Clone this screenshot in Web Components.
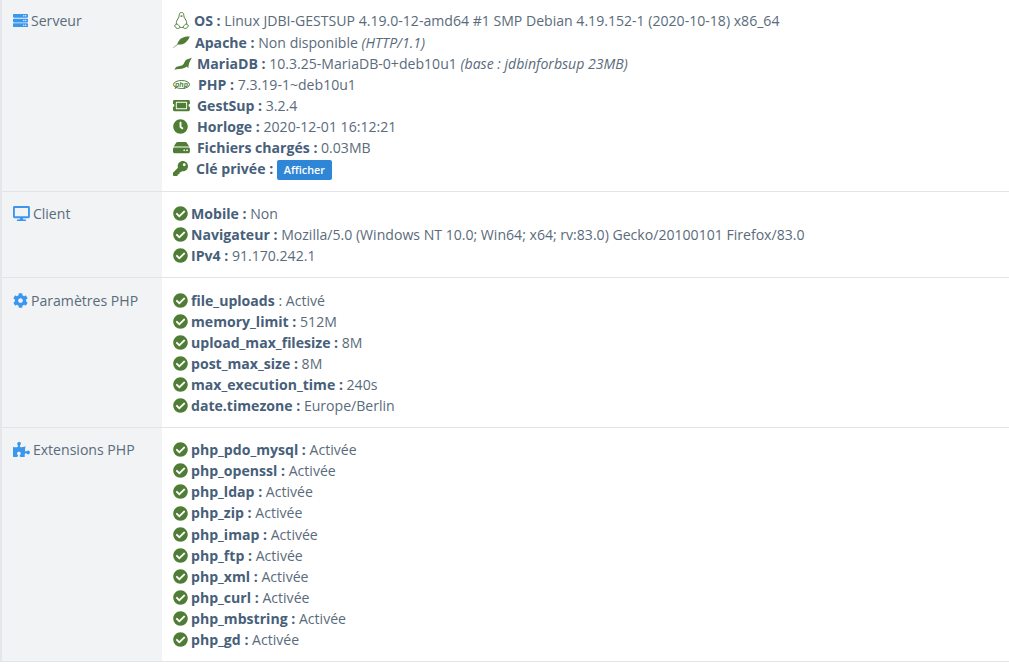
<!DOCTYPE html>
<html lang="fr">
<head>
<meta charset="utf-8">
<title>Système</title>
<style>
    html, body { margin: 0; padding: 0; background: #fff; }
    body { font: 14.08px/1.5 "Open Sans", sans-serif; color: #5a6b7b; overflow: hidden; }
</style>
</head>
<body>
<sys-table>
    <sys-row label="Serveur" icon="server" width="15" top="10.4" bottom="11.6">
        <sys-line icon="linux" width="15" left="1" gap="5"><b>OS :</b> Linux JDBI-GESTSUP 4.19.0-12-amd64 #1 SMP Debian 4.19.152-1 (2020-10-18) x86_64</sys-line>
        <sys-line icon="feather" width="17" gap="5"><b>Apache :</b> Non disponible <i>(HTTP/1.1)</i></sys-line>
        <sys-line icon="seal" width="18" left="1" gap="5"><b>MariaDB :</b> 10.3.25-MariaDB-0+deb10u1 <i>(base : jdbinforbsup 23MB)</i></sys-line>
        <sys-line icon="php" width="17" gap="8"><b>PHP :</b> 7.3.19-1~deb10u1</sys-line>
        <sys-line icon="ticket" width="16.9" gap="7"><b>GestSup :</b> 3.2.4</sys-line>
        <sys-line icon="clock" width="15" gap="9"><b>Horloge :</b> 2020-12-01 16:12:21</sys-line>
        <sys-line icon="hdd" width="16.9" gap="7"><b>Fichiers chargés :</b> 0.03MB</sys-line>
        <sys-line icon="key" width="15" gap="8"><b>Clé privée :</b> <sys-button>Afficher</sys-button></sys-line>
    </sys-row>
    <sys-row label="Client" icon="desktop" width="16.9">
        <sys-line><b>Mobile :</b> Non</sys-line>
        <sys-line><b>Navigateur :</b> Mozilla/5.0 (Windows NT 10.0; Win64; x64; rv:83.0) Gecko/20100101 Firefox/83.0</sys-line>
        <sys-line><b>IPv4 :</b> 91.170.242.1</sys-line>
    </sys-row>
    <sys-row label="Paramètres PHP" icon="cog" width="15" top="11.4" bottom="10.6">
        <sys-line><b>file_uploads</b> : Activé</sys-line>
        <sys-line><b>memory_limit :</b> 512M</sys-line>
        <sys-line><b>upload_max_filesize :</b> 8M</sys-line>
        <sys-line><b>post_max_size :</b> 8M</sys-line>
        <sys-line><b>max_execution_time :</b> 240s</sys-line>
        <sys-line><b>date.timezone :</b> Europe/Berlin</sys-line>
    </sys-row>
    <sys-row label="Extensions PHP" icon="puzzle" width="16.9" top="11.3" bottom="10.7">
        <sys-line><b>php_pdo_mysql :</b> Activée</sys-line>
        <sys-line><b>php_openssl :</b> Activée</sys-line>
        <sys-line><b>php_ldap :</b> Activée</sys-line>
        <sys-line><b>php_zip :</b> Activée</sys-line>
        <sys-line><b>php_imap :</b> Activée</sys-line>
        <sys-line><b>php_ftp :</b> Activée</sys-line>
        <sys-line><b>php_xml :</b> Activée</sys-line>
        <sys-line><b>php_curl :</b> Activée</sys-line>
        <sys-line><b>php_mbstring :</b> Activée</sys-line>
        <sys-line><b>php_gd :</b> Activée</sys-line>
    </sys-row>
</sys-table>

<script>
// icones du jeu d'icones, puis logos redessines a la main
const ICONS = {
    check: ['0 0 512 512', '<path d="M504 256c0 136.967-111.033 248-248 248S8 392.967 8 256 119.033 8 256 8s248 111.033 248 248zM227.314 387.314l184-184c6.248-6.248 6.248-16.379 0-22.627l-22.627-22.627c-6.248-6.249-16.379-6.249-22.628 0L216 308.118l-70.059-70.059c-6.248-6.248-16.379-6.248-22.628 0l-22.627 22.627c-6.248 6.248-6.248 16.379 0 22.627l104 104c6.249 6.249 16.379 6.249 22.628.001z"/>'],
    clock: ['0 0 512 512', '<path d="M256,8C119,8,8,119,8,256S119,504,256,504,504,393,504,256,393,8,256,8Zm92.49,313h0l-20,25a16,16,0,0,1-22.49,2.5h0l-67-49.72a40,40,0,0,1-15-31.23V112a16,16,0,0,1,16-16h32a16,16,0,0,1,16,16V256l58,42.5A16,16,0,0,1,348.49,321Z"/>'],
    key: ['0 0 512 512', '<path d="M512 176.001C512 273.203 433.202 352 336 352c-11.22 0-22.19-1.062-32.827-3.069l-24.012 27.014A23.999 23.999 0 0 1 261.223 384H224v40c0 13.255-10.745 24-24 24h-40v40c0 13.255-10.745 24-24 24H24c-13.255 0-24-10.745-24-24v-78.059c0-6.365 2.529-12.47 7.029-16.971l161.802-161.802C163.108 213.814 160 195.271 160 176 160 78.798 238.797.001 335.999 0 433.488-.001 512 78.511 512 176.001zM336 128c0 26.51 21.49 48 48 48s48-21.49 48-48-21.49-48-48-48-48 21.49-48 48z"/>'],
    hdd: ['0 0 576 512', '<path d="M576 304v96c0 26.51-21.49 48-48 48H48c-26.51 0-48-21.49-48-48v-96c0-26.51 21.49-48 48-48h480c26.51 0 48 21.49 48 48zm-48-80a79.557 79.557 0 0 1 30.777 6.165L462.25 85.374A48.003 48.003 0 0 0 422.311 64H153.689a48 48 0 0 0-39.938 21.374L17.223 230.165A79.557 79.557 0 0 1 48 224h480zm-48 96c-17.673 0-32 14.327-32 32s14.327 32 32 32 32-14.327 32-32-14.327-32-32-32zm-96 0c-17.673 0-32 14.327-32 32s14.327 32 32 32 32-14.327 32-32-14.327-32-32-32z"/>'],
    ticket: ['0 0 576 512', '<path d="M128 160h320v192H128V160zm400 96c0 26.51 21.49 48 48 48v96c0 26.51-21.49 48-48 48H48c-26.51 0-48-21.49-48-48v-96c26.51 0 48-21.49 48-48s-21.49-48-48-48v-96c0-26.51 21.49-48 48-48h480c26.51 0 48 21.49 48 48v96c-26.51 0-48 21.49-48 48zm-48-104c0-13.255-10.745-24-24-24H120c-13.255 0-24 10.745-24 24v208c0 13.255 10.745 24 24 24h336c13.255 0 24-10.745 24-24V152z"/>'],
    server: ['0 0 512 512', '<path d="M480 160H32c-17.673 0-32-14.327-32-32V64c0-17.673 14.327-32 32-32h448c17.673 0 32 14.327 32 32v64c0 17.673-14.327 32-32 32zm-48-88c-13.255 0-24 10.745-24 24s10.745 24 24 24 24-10.745 24-24-10.745-24-24-24zm-64 0c-13.255 0-24 10.745-24 24s10.745 24 24 24 24-10.745 24-24-10.745-24-24-24zm112 248H32c-17.673 0-32-14.327-32-32v-64c0-17.673 14.327-32 32-32h448c17.673 0 32 14.327 32 32v64c0 17.673-14.327 32-32 32zm-48-88c-13.255 0-24 10.745-24 24s10.745 24 24 24 24-10.745 24-24-10.745-24-24-24zm-64 0c-13.255 0-24 10.745-24 24s10.745 24 24 24 24-10.745 24-24-10.745-24-24-24zm112 248H32c-17.673 0-32-14.327-32-32v-64c0-17.673 14.327-32 32-32h448c17.673 0 32 14.327 32 32v64c0 17.673-14.327 32-32 32zm-48-88c-13.255 0-24 10.745-24 24s10.745 24 24 24 24-10.745 24-24-10.745-24-24-24zm-64 0c-13.255 0-24 10.745-24 24s10.745 24 24 24 24-10.745 24-24-10.745-24-24-24z"/>'],
    desktop: ['0 0 576 512', '<path d="M528 0H48C21.5 0 0 21.5 0 48v320c0 26.5 21.5 48 48 48h192l-16 48h-72c-13.3 0-24 10.7-24 24s10.7 24 24 24h272c13.3 0 24-10.7 24-24s-10.7-24-24-24h-72l-16-48h192c26.5 0 48-21.5 48-48V48c0-26.5-21.5-48-48-48zm-16 352H64V64h448v288z"/>'],
    cog: ['0 0 512 512', '<path d="M487.4 315.7l-42.6-24.6c4.3-23.2 4.3-47 0-70.2l42.6-24.6c4.9-2.8 7.1-8.6 5.5-14-11.1-35.6-30-67.8-54.7-94.6-3.8-4.1-10-5.1-14.8-2.3L380.8 110c-17.9-15.4-38.5-27.3-60.8-35.1V25.8c0-5.6-3.9-10.5-9.4-11.7-36.7-8.2-74.3-7.8-109.2 0-5.5 1.2-9.4 6.1-9.4 11.7V75c-22.2 7.9-42.8 19.8-60.8 35.1L88.7 85.5c-4.9-2.8-11-1.9-14.8 2.3-24.7 26.7-43.6 58.9-54.7 94.6-1.7 5.4.6 11.2 5.5 14L67.3 221c-4.3 23.2-4.3 47 0 70.2l-42.6 24.6c-4.9 2.8-7.1 8.6-5.5 14 11.1 35.6 30 67.8 54.7 94.6 3.8 4.1 10 5.1 14.8 2.3l42.6-24.6c17.9 15.4 38.5 27.3 60.8 35.1v49.2c0 5.6 3.9 10.5 9.4 11.7 36.7 8.2 74.3 7.8 109.2 0 5.5-1.2 9.4-6.1 9.4-11.7v-49.2c22.2-7.9 42.8-19.8 60.8-35.1l42.6 24.6c4.9 2.8 11 1.9 14.8-2.3 24.7-26.7 43.6-58.9 54.7-94.6 1.5-5.5-.7-11.3-5.6-14.1zM256 336c-44.1 0-80-35.9-80-80s35.9-80 80-80 80 35.9 80 80-35.9 80-80 80z"/>'],
    puzzle: ['0 0 576 512', '<path d="M519.442 288.651c-41.519 0-59.5 31.593-82.058 31.593C377.409 320.244 432 144 432 144s-196.288 80-196.288-3.297c0-35.827 36.288-46.25 36.288-85.985C272 19.216 243.885 0 210.539 0c-34.654 0-66.366 18.891-66.366 56.346 0 41.364 31.711 59.277 31.711 81.75C175.885 207.719 0 166.758 0 166.758v333.237s178.635 41.047 178.635-28.662c0-22.473-40-40.107-40-81.471 0-37.456 29.25-56.346 63.577-56.346 33.673 0 61.788 19.216 61.788 54.717 0 39.735-36.288 50.158-36.288 85.985 0 60.803 129.675 25.73 181.23 25.73 0 0-34.725-120.101 25.827-120.101 35.962 0 46.423 36.152 86.308 36.152C556.712 416 576 387.99 576 354.443c0-34.199-18.962-65.792-56.558-65.792z"/>'],
    linux: ['0 0 15 17', '<g fill="none" stroke="currentColor" stroke-width="1"><path d="M7.500.5C5.800.5 5.200 1.800 5.200 3.300c0 1.600-.5 2.500-1.400 3.700-1 1.400-1.700 3-1.500 5.200M7.500.5c1.700 0 2.300 1.300 2.300 2.800 0 1.600.5 2.500 1.400 3.700 1 1.400 1.700 3 1.500 5.200"/><path d="M5.800 15.200c1 .4 2.400.4 3.400 0"/><path d="M.8 13.200c.9-.9 2.600-1.400 3.300-.6.800.9 1.800 2.300 1.600 3-.2.900-2 1-3 .7-.9-.4-2.500-2.400-1.900-3.100zM14.200 13.200c-.9-.9-2.600-1.400-3.300-.6-.8.900-1.800 2.300-1.600 3 .2.900 2 1 3 .7.900-.4 2.500-2.400 1.900-3.100z"/></g><path d="M6 3.900l1.500-.7 1.500.7-1.500 1.100z"/>'],
    feather: ['0 0 17 12', '<path d="M16.800.6c-2.900-.4-5.800.2-8.200 1.700C6.700 3.500 5 5.500 4.300 8.300c2.500.6 5.400.1 7.700-1.300C14.300 5.500 15.900 3.100 16.800.6z"/><path d="M5.200 7.300L.1 11.400l.3.500 5.400-3.800z" opacity=".7"/>'],
    seal: ['0 0 18 13', '<path d="M17.700.3c-.6 1-1.400 1.200-2.700 1.500-1.300.3-2 .5-2.700 1C11.200 3.600 10.700 5 10 6.200 9.200 7.700 8.300 8.300 6.800 8.800c-1.700.6-4.200.6-5 1.600-.5.600-1 1.500-1.300 2.400 1.400-.5 3.100-.7 4.500-.8 2-.1 3.800-.4 5.200-1 1.100-.5 2-1.200 2.800-1.600.3.800.8 1.500 1.500 1.900-.2-.9-.1-2.300.2-3.300.4-1.500.7-2.800 1.400-3.900.5-.9 1.300-1.900 1.600-3.800z"/>'],
    php: ['0 0 17 9', '<ellipse cx="8.500" cy="4.500" rx="8" ry="4" fill="none" stroke="currentColor" stroke-width="1"/><text x="8.500" y="6.700" text-anchor="middle" font-family="Liberation Sans, sans-serif" font-size="7" font-style="italic" font-weight="700">php</text>']
};

class SysIcon extends HTMLElement {
    connectedCallback() {
        const box = ICONS[this.getAttribute('name')];
        const w = parseFloat(this.getAttribute('width')) || 15;
        const [, , vw, vh] = box[0].split(' ').map(Number);
        this.attachShadow({ mode: 'open' });
        this.shadowRoot.innerHTML = `
            <style>
                :host { display: inline-flex; align-items: center; justify-content: center; height: 1.5em; vertical-align: top; }
                svg { display: block; width: ${w}px; height: ${w * vh / vw}px; fill: currentColor; }
            </style>
            <svg viewBox="${box[0]}" aria-hidden="true">${box[1]}</svg>`;
    }
}

class SysTable extends HTMLElement {
    constructor() {
        super();
        this.attachShadow({ mode: 'open' });
        this.shadowRoot.innerHTML = `
            <style>
                :host { display: block; border-left: 2px solid #e4e6e9; }
            </style>
            <slot></slot>`;
    }
}

class SysRow extends HTMLElement {
    connectedCallback() {
        const top = this.getAttribute('top') || 11;
        const bottom = this.getAttribute('bottom') || 11;
        this.attachShadow({ mode: 'open' });
        this.shadowRoot.innerHTML = `
            <style>
                :host { display: grid; grid-template-columns: 160px 1fr; border-bottom: 1px solid #e2e5e8; }
                .head { background: #f1f3f5; padding: ${top}px 11px ${bottom}px; display: flex; align-items: flex-start; gap: 3px; }
                .head sys-icon { color: #3b97ee; }
                .body { padding: ${top}px 11px ${bottom}px; }
            </style>
            <div class="head"><sys-icon name="${this.getAttribute('icon')}" width="${this.getAttribute('width')}"></sys-icon><span>${this.getAttribute('label')}</span></div>
            <div class="body"><slot></slot></div>`;
    }
}

class SysLine extends HTMLElement {
    connectedCallback() {
        const icon = this.getAttribute('icon') || 'check';
        const width = this.getAttribute('width') || 15;
        const left = this.getAttribute('left') || 0;
        const gap = this.getAttribute('gap') || 3;
        this.attachShadow({ mode: 'open' });
        this.shadowRoot.innerHTML = `
            <style>
                :host { display: block; white-space: nowrap; }
                sys-icon { color: #4f7d35; margin: 0 ${gap}px 0 ${left}px; }
                ::slotted(b) { font-weight: 700; color: #47607a; }
            </style>
            <sys-icon name="${icon}" width="${width}"></sys-icon><slot></slot>`;
    }
}

class SysButton extends HTMLElement {
    constructor() {
        super();
        this.attachShadow({ mode: 'open' });
        this.shadowRoot.innerHTML = `
            <style>
                :host {
                    display: inline-block; background: #2f86d6; color: #fff;
                    font-size: 10.8px; font-weight: 600; line-height: 20px;
                    padding: 0 7px; border-radius: 2px; margin-bottom: -1px;
                }
            </style>
            <slot></slot>`;
    }
}

customElements.define('sys-icon', SysIcon);
customElements.define('sys-table', SysTable);
customElements.define('sys-row', SysRow);
customElements.define('sys-line', SysLine);
customElements.define('sys-button', SysButton);
</script>
</body>
</html>
